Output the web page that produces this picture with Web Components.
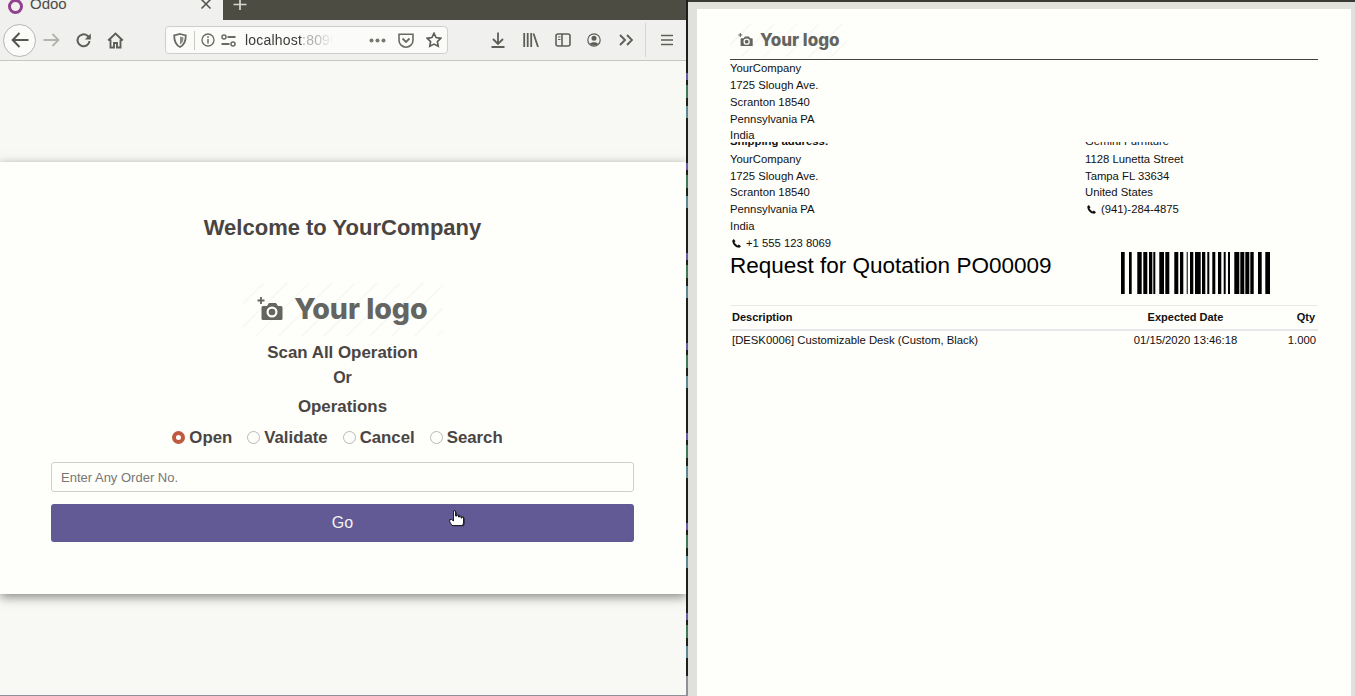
<!DOCTYPE html>
<html>
<head>
<meta charset="utf-8">
<title>Odoo</title>
<style>
html, body { margin: 0; padding: 0; height: 100%; overflow: hidden; }
body { font-family: "Liberation Sans", Arial, sans-serif; background: #e0e0dc; }
split-screen { height: 696px; }
</style>
</head>
<body>
<split-screen>
  <browser-window slot="left">
    <scan-card></scan-card>
  </browser-window>
  <report-sheet slot="right"></report-sheet>
</split-screen>

<script>
// two windows side by side, like a tiled desktop
class SplitScreen extends HTMLElement {
  constructor() {
    super();
    this.attachShadow({ mode: 'open' });
    this.shadowRoot.innerHTML = `
    <style>
      :host { display: flex; width: 1355px; overflow: hidden; }
      .left { width: 686px; flex: none; height: 100%; }
      .rule { width: 2px; flex: none; background:
        linear-gradient(#1e1e1a, #1e1e1a) top / 100% 60px no-repeat,
        linear-gradient(#8e9298, #8e9298) bottom / 100% 20px no-repeat,
        repeating-linear-gradient(180deg, #3f7a55 0 8px, #1e1e1a 8px 16px, #5a8a90 16px 28px, #1e1e1a 28px 73px, #6a5aa0 73px 80px, #1e1e1a 80px 85px, #3f7a55 85px 90px); }
      .right { flex: 1; min-width: 0; height: 100%; }
    </style>
    <div class="left"><slot name="left"></slot></div>
    <div class="rule"></div>
    <div class="right"><slot name="right"></slot></div>
    `;
  }
}

class BrowserWindow extends HTMLElement {
  constructor() {
    super();
    this.attachShadow({ mode: 'open' });
    this.shadowRoot.innerHTML = `
    <style>
      :host { display: flex; flex-direction: column; height: 100%; box-sizing: border-box; background: #f8f8f5; border-bottom: 1px solid #8e9298; }
      .tabs { display: flex; height: 20px; flex: none; overflow: hidden; background: #4d4c42; }
      .tab { width: 223px; flex: none; background: #f0f0ee; display: flex; height: 20px; color: #4c4c48; font-size: 15px; }
      .ring { width: 9px; height: 9px; border: 3px solid #93408f; border-radius: 50%; margin: -1px 7px 0 8px; flex: none; }
      .name { flex: 1; line-height: 16px; margin-top: -4px; }
      .tab svg { margin: -2px 11px 0 0; }
      .plus { margin: 0 0 0 9px; }
      .bar { display: flex; align-items: center; height: 40px; flex: none; background: #f0f0ee; border-bottom: 1px solid #c6c6c2; }
      .bar svg { display: block; flex: none; }
      .back { width: 33px; height: 33px; margin-left: 3px; border: 1px solid #b5b5b1; border-radius: 50%; background: #fbfbf9; box-sizing: border-box; display: flex; align-items: center; justify-content: center; }
      .url { width: 283px; height: 28px; margin-left: 41px; box-sizing: border-box; border: 1px solid #cfcfcb; border-radius: 4px; background: #fbfbf9; display: flex; align-items: center; flex: none; }
      .sep { width: 1px; height: 19px; background: #c8c8c4; margin: 0 6px 0 7px; flex: none; }
      .host { font-size: 14px; color: #3b3b38; margin-left: 9px; width: 88px; flex: none; white-space: nowrap; overflow: hidden; letter-spacing: .2px; -webkit-mask-image: linear-gradient(90deg, #000 80%, transparent); mask-image: linear-gradient(90deg, #000 80%, transparent); }
      .host span { color: #b0b0ac; }
      .rule { width: 1px; height: 34px; background: #d6d6d2; }
      .page { flex: 1; min-height: 0; padding-top: 101px; }
    </style>
    <div class="tabs">
      <div class="tab">
        <div class="ring"></div>
        <div class="name">Odoo</div>
        <svg width="12" height="12" viewBox="0 0 12 12"><path d="M1.500 1.500l9 9M10.500 1.500l-9 9" stroke="#55554f" stroke-width="1.600" fill="none"/></svg>
      </div>
      <svg class="plus" width="16" height="20" viewBox="0 0 16 20"><path d="M8 -2v12M1.500 4.500h13" stroke="#d6d6d0" stroke-width="1.700" fill="none"/></svg>
    </div>
    <div class="bar">
      <div class="back"><svg width="18" height="16" viewBox="0 0 18 16"><path d="M8.500 1L1.700 8l6.800 7M2 8h15.500" stroke="#55554f" stroke-width="2" fill="none"/></svg></div>
      <svg style="margin-left:7px" width="17" height="14" viewBox="0 0 17 14"><path d="M9.500 1l6 6-6 6M15 7H0.500" stroke="#b4b4ae" stroke-width="1.800" fill="none"/></svg>
      <svg style="margin-left:15px" width="17" height="17" viewBox="0 0 17 17"><path d="M14.500 9a6 6 0 1 1-2-5.200L15 6" stroke="#5f5f59" stroke-width="2" fill="none"/><path d="M15.800 1.500v6h-6z" fill="#5f5f59"/></svg>
      <svg style="margin-left:15px" width="17" height="17" viewBox="0 0 17 17"><path d="M1.200 8.500L8.500 1.500l7.300 7M3.500 7.500v8h3.500v-4.500h3v4.500h3.500v-8" stroke="#5f5f59" stroke-width="1.900" fill="none"/></svg>
      <div class="url">
        <svg style="margin-left:7px" width="14" height="15" viewBox="0 0 14 15"><path d="M7 1l5.800 1.500c0 6-1.500 9.500-5.800 11.500C2.700 12 1.200 8.500 1.200 2.500z" stroke="#6a6a64" stroke-width="1.800" fill="none"/><path d="M7 3.500l3.500 1c0 3.500-1 5.500-3.500 7z" fill="#8a8a84"/></svg>
        <div class="sep"></div>
        <svg width="14" height="14" viewBox="0 0 14 14"><circle cx="7" cy="7" r="6" stroke="#6a6a64" stroke-width="1.300" fill="none"/><path d="M7 6v4.500M7 3.300v1.600" stroke="#6a6a64" stroke-width="1.500"/></svg>
        <svg style="margin-left:6px" width="15" height="13" viewBox="0 0 15 13"><circle cx="3" cy="3" r="2" stroke="#6a6a64" stroke-width="1.500" fill="none"/><path d="M6.500 3h8M0.500 10h8" stroke="#6a6a64" stroke-width="1.800"/><circle cx="12" cy="10" r="2" stroke="#6a6a64" stroke-width="1.500" fill="none"/></svg>
        <div class="host">localhost<span>:8090</span></div>
        <svg style="margin-left:36px" width="17" height="5" viewBox="0 0 17 5"><circle cx="2.500" cy="2.500" r="2" fill="#77776f"/><circle cx="8.500" cy="2.500" r="2" fill="#77776f"/><circle cx="14.500" cy="2.500" r="2" fill="#77776f"/></svg>
        <svg style="margin-left:12px" width="16" height="15" viewBox="0 0 16 15"><path d="M1 1.200h14v6a7 7 0 0 1-14 0z" stroke="#6a6a64" stroke-width="1.600" fill="none"/><path d="M4.500 5.500L8 9l3.500-3.500" stroke="#6a6a64" stroke-width="1.800" fill="none"/></svg>
        <svg style="margin-left:12px" width="16" height="16" viewBox="0 0 16 16"><path d="M8 1.300l2.100 4.300 4.700.700-3.400 3.300.8 4.700L8 12.100l-4.200 2.200.8-4.700L1.200 6.300l4.700-.7z" stroke="#5f5f59" stroke-width="1.700" fill="none"/></svg>
      </div>
      <svg style="margin-left:43px" width="14" height="16" viewBox="0 0 14 16"><path d="M7 0.500v11M2 7l5 5 5-5M.5 15h13" stroke="#5f5f59" stroke-width="1.800" fill="none"/></svg>
      <svg style="margin-left:18px" width="16" height="14" viewBox="0 0 16 14"><path d="M1.200 0v14M4.700 0v14M8.200 0v14M10.500 .5L15 14" stroke="#5f5f59" stroke-width="1.800" fill="none"/></svg>
      <svg style="margin-left:16px" width="16" height="14" viewBox="0 0 16 14"><rect x="1" y="1" width="14" height="12" rx="2" stroke="#5f5f59" stroke-width="1.600" fill="none"/><path d="M7 1v12" stroke="#5f5f59" stroke-width="1.600"/><path d="M3 4h2.500M3 6.500h2.500" stroke="#5f5f59" stroke-width="1"/></svg>
      <svg style="margin-left:16px" width="14" height="14" viewBox="0 0 14 14"><circle cx="7" cy="7" r="6.200" stroke="#5f5f59" stroke-width="1.200" fill="none"/><circle cx="7" cy="5.300" r="2.500" fill="#5f5f59"/><path d="M2.800 11c1-2.500 7.400-2.500 8.400 0-2 2-6.400 2-8.400 0z" fill="#5f5f59"/></svg>
      <svg style="margin-left:18px" width="14" height="12" viewBox="0 0 14 12"><path d="M1 1l5 5-5 5M8 1l5 5-5 5" stroke="#5f5f59" stroke-width="1.900" fill="none"/></svg>
      <div class="rule" style="margin-left:12px"></div>
      <svg style="margin-left:15px" width="12" height="12" viewBox="0 0 12 12"><path d="M0 1.500h12M0 6h12M0 10.500h12" stroke="#5f5f59" stroke-width="1.500"/></svg>
    </div>
    <div class="page"><slot></slot></div>
    `;
  }
}

class YourLogo extends HTMLElement {
  constructor() {
    super();
    this.attachShadow({ mode: 'open' });
    this.shadowRoot.innerHTML = `
    <style>
      :host { display: flex; align-items: center; justify-content: center; box-sizing: border-box; padding-bottom: 2px; color: #646460; font-family: Inter, sans-serif; font-weight: 800; white-space: nowrap;
        background: repeating-linear-gradient(135deg, transparent 0 14px, #f8f8f4 14px 16px); }
      svg { display: block; flex: none; width: var(--logo-icon, 26px); height: auto; }
    </style>
    <svg viewBox="0 0 26 24"><path d="M4 0v7M0.500 3.500h7" stroke="currentColor" stroke-width="1.800"/><path d="M6 9h4l2-3h7l2 3h3a1.500 1.500 0 0 1 1.500 1.500v11a1.500 1.500 0 0 1-1.500 1.500h-18a1.500 1.500 0 0 1-1.500-1.500v-11a1.500 1.500 0 0 1 1.500-1.500z" fill="currentColor"/><circle cx="15" cy="15" r="5.500" fill="#fefefb"/><circle cx="15" cy="15" r="3.300" fill="currentColor"/></svg>
    <span>Your logo</span>
    `;
  }
}

class ScanOption extends HTMLElement {
  constructor() {
    super();
    this.attachShadow({ mode: 'open' });
    this.shadowRoot.innerHTML = `
    <style>
      :host { display: inline-flex; align-items: center; }
      i { display: block; width: 13px; height: 13px; box-sizing: border-box; border: 1px solid #b9b9b5; border-radius: 50%; background: #fdfdfb; margin: -2px 4px 0 0; }
      :host([checked]) i { border: 4px solid #c05a3c; background: #fff; }
    </style>
    <i></i><slot></slot>
    `;
  }
}

class ScanCard extends HTMLElement {
  constructor() {
    super();
    this.attachShadow({ mode: 'open' });
    this.shadowRoot.innerHTML = `
    <style>
      :host { display: flex; flex-direction: column; align-items: center; box-sizing: border-box; height: 432px; padding-right: 1px; background: #fefefb; box-shadow: 0 3px 10px rgba(40,40,36,.55); color: #4a4542; font-family: "Liberation Sans", sans-serif; font-weight: 700; text-align: center; }
      h1 { font-size: 22px; line-height: 28px; margin: 52px 0 0; }
      your-logo { width: 200px; height: 53px; margin-top: 41px; font-size: 28.500px; gap: 11px; --logo-icon: 26px; }
      p { margin: 0; font-size: 16.900px; }
      .scan { line-height: 20px; margin-top: 7px; }
      .or { line-height: 20px; margin-top: 5px; font-size: 16px; }
      .ops { line-height: 20px; margin-top: 9px; }
      .radios { display: flex; gap: 15px; margin: 11px 10px 0 0; font-size: 16.800px; line-height: 20px; }
      input { display: block; box-sizing: border-box; width: 583px; height: 30px; margin-top: 14px; padding: 0 9px; border: 1px solid #cfcfcb; border-radius: 3px; background: #fefefb; font: 13px "Liberation Sans", sans-serif; color: #4a4542; }
      input::placeholder { color: #777773; opacity: 1; }
      .go { box-sizing: border-box; width: 583px; height: 38px; margin-top: 12px; background: #625a95; border-radius: 3px; color: #f4f3f0; font-weight: 400; font-size: 16px; line-height: 38px; position: relative; }
      .go svg { position: absolute; left: 398px; top: 6px; }
    </style>
    <h1>Welcome to YourCompany</h1>
    <your-logo></your-logo>
    <p class="scan">Scan All Operation</p>
    <p class="or">Or</p>
    <p class="ops">Operations</p>
    <div class="radios">
      <scan-option checked>Open</scan-option>
      <scan-option>Validate</scan-option>
      <scan-option>Cancel</scan-option>
      <scan-option>Search</scan-option>
    </div>
    <input type="text" placeholder="Enter Any Order No.">
    <div class="go">Go
      <svg width="17" height="17" viewBox="0 0 17 17"><path d="M5 1h2v5h1.500V5H10v2h1V6h1.500v2h1V7H15v6l-1 2.500H3.500L1 12V9.500h2L5 11z" fill="#000" transform="translate(.8 .8)" opacity=".55"/><path d="M4.500 .8h2v5.200H8V5h1.500v2h1V6H12v2h1V7h1.500v6l-1 2.500H3L.8 12V9.500h1.700l2 1.500z" fill="#fff" stroke="#111" stroke-width=".9"/></svg>
    </div>
    `;
  }
}

class PhoneLine extends HTMLElement {
  constructor() {
    super();
    this.attachShadow({ mode: 'open' });
    this.shadowRoot.innerHTML = `
    <style>
      :host { display: flex; align-items: center; gap: 5px; }
      svg { margin-left: 2px; flex: none; }
    </style>
    <svg width="9" height="9" viewBox="0 0 9 9"><path d="M1.800 0L0.300 1.500C0.300 5.500 3.500 8.700 7.500 8.700L9 7.200 6.800 5.500 5.700 6.500C4.500 6 3 4.500 2.500 3.300L3.500 2.200z" fill="#111"/></svg>
    <slot></slot>
    `;
  }
}

class BarCode extends HTMLElement {
  connectedCallback() {
    this.attachShadow({ mode: 'open' });
    // [left, right] of each bar, read off the reference
    const bars = [[0,3.7],[8,10.7],[16.300,20.700],[22.300,26.300],[28,31.300],[32.300,34.300],[38.300,43],[44.300,48.300],[53.300,57.300],[59,62.300],[65.700,66.700],[69,72.300],
      [74,79.700],[81,84.300],[86.300,88.300],[91.300,94.300],[97,100.300],[102.700,104.700],[107,109],[113.300,118.300],[119.300,123.300],[124.300,128.300],[129.300,132.700],[137,140.700],[144.300,149]];
    const rects = bars.map(b => `<rect x="${b[0]}" width="${(b[1] - b[0]).toFixed(1)}" height="42"/>`).join('');
    this.shadowRoot.innerHTML = `
    <style>:host { display: block; width: 149px; height: 42px; flex: none; } svg { display: block; }</style>
    <svg width="149" height="42" viewBox="0 0 149 42" fill="#000">${rects}</svg>
    `;
  }
}

class ReportSheet extends HTMLElement {
  constructor() {
    super();
    this.attachShadow({ mode: 'open' });
    this.shadowRoot.innerHTML = `
    <style>
      :host { display: block; height: 100%; box-sizing: border-box; padding: 7px 4px 0 9px; background: #e0e0dc; border-top: 2px solid #3a3a34; color: #111; font-family: "Liberation Sans", sans-serif; font-size: 11.300px; }
      .paper { height: 100%; box-sizing: border-box; padding: 15px 33px 0 33px; background: #fefefb; }
      .head { height: 35px; border-bottom: 1px solid #44443f; }
      your-logo { width: 117px; height: 33px; font-size: 17px; gap: 7px; justify-content: flex-start; padding-left: 8px; --logo-icon: 15px; }
      .lines div, phone-line { line-height: 16.800px; height: 16.800px; white-space: nowrap; }
      .lines.top { height: 82px; overflow: hidden; }
      .lines.top div { line-height: 16.850px; height: 16.850px; }
      .clip { display: flex; justify-content: space-between; height: 6px; overflow: hidden; align-items: flex-end; line-height: 13px; }
      .clip b { display: block; height: 13px; }
      .clip span { display: block; width: 233px; height: 13px; }
      .cols { display: flex; justify-content: space-between; margin-top: 2.800px; padding-bottom: .200px; }
      .cols .side { width: 233px; }
      h2 { margin: 1px 0 0; font-weight: 400; font-size: 22.500px; line-height: 26px; color: #000; white-space: nowrap; }
      .titlerow { display: flex; justify-content: space-between; }
      bar-code { margin: 0 48px 0 0; }
      .table { margin-top: 11px; }
      .row { display: grid; grid-template-columns: 1fr 111px 75px; padding: 0 2px; align-items: center; }
      .row div:nth-child(2) { text-align: center; }
      .row div:nth-child(3) { text-align: right; }
      .th { height: 23px; border-top: 1px solid #e8e8e4; border-bottom: 2px solid #e8e8ea; font-weight: 700; font-size: 11px; }
      .th div:nth-child(3) { padding-right: 1px; }
      .td { height: 19px; }
    </style>
    <div class="paper">
      <div class="head"><your-logo></your-logo></div>
      <div class="lines top">
        <div>YourCompany</div>
        <div>1725 Slough Ave.</div>
        <div>Scranton 18540</div>
        <div>Pennsylvania PA</div>
        <div>India</div>
      </div>
      <div class="clip"><b>Shipping address:</b><span>Gemini Furniture</span></div>
      <div class="cols">
        <div class="lines">
          <div>YourCompany</div>
          <div>1725 Slough Ave.</div>
          <div>Scranton 18540</div>
          <div>Pennsylvania PA</div>
          <div>India</div>
          <phone-line>+1 555 123 8069</phone-line>
        </div>
        <div class="lines side">
          <div>1128 Lunetta Street</div>
          <div>Tampa FL 33634</div>
          <div>United States</div>
          <phone-line>(941)-284-4875</phone-line>
        </div>
      </div>
      <div class="titlerow">
        <h2>Request for Quotation PO00009</h2>
        <bar-code></bar-code>
      </div>
      <div class="table">
        <div class="row th"><div>Description</div><div>Expected Date</div><div>Qty</div></div>
        <div class="row td"><div>[DESK0006] Customizable Desk (Custom, Black)</div><div>01/15/2020 13:46:18</div><div>1.000</div></div>
      </div>
    </div>
    `;
  }
}

customElements.define('split-screen', SplitScreen);
customElements.define('browser-window', BrowserWindow);
customElements.define('your-logo', YourLogo);
customElements.define('scan-option', ScanOption);
customElements.define('scan-card', ScanCard);
customElements.define('phone-line', PhoneLine);
customElements.define('bar-code', BarCode);
customElements.define('report-sheet', ReportSheet);
</script>
</body>
</html>
